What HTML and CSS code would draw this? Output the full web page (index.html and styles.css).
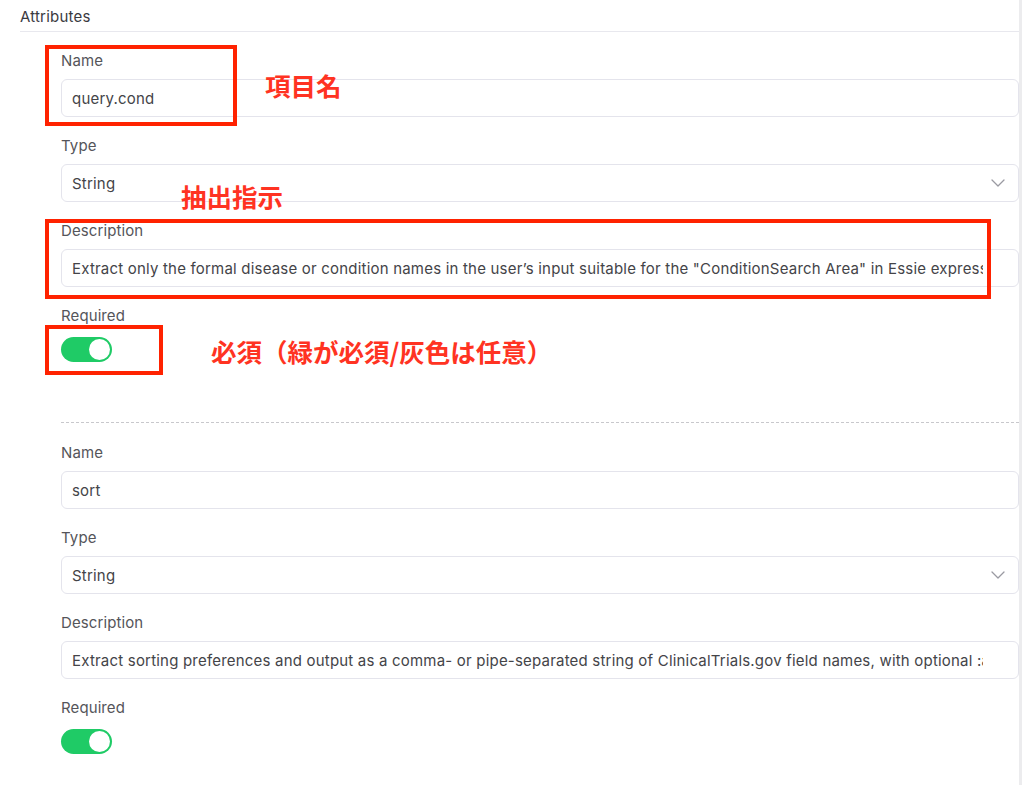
FILE: index.html
```html
<!DOCTYPE html>
<html lang="ja">
<head>
  <meta charset="UTF-8">
  <title>Attributes</title>
  <link rel="stylesheet" href="styles.css">
</head>
<body>
<main class="panel">

  <div class="panel-title">Attributes</div>

  <div class="attr-list">

    <div class="attr">
      <div class="field">
        <label class="field-label">Name</label>
        <input class="text-input" type="text" value="query.cond" readonly>
      </div>
      <div class="field">
        <label class="field-label">Type</label>
        <div class="select-box">
          <span>String</span>
          <svg class="chevron" width="14" height="8" viewBox="0 0 14 8"><path d="M1 1l6 6 6-6" fill="none" stroke="#9a9aa2" stroke-width="1.3" stroke-linecap="round" stroke-linejoin="round"/></svg>
        </div>
      </div>
      <div class="field">
        <label class="field-label">Description</label>
        <input class="text-input desc" type="text" value="Extract only the formal disease or condition names in the user’s input suitable for the &quot;ConditionSearch Area&quot; in Essie expression syntax" readonly>
      </div>
      <div class="field">
        <label class="field-label">Required</label>
        <div class="toggle on"><span class="knob"></span></div>
      </div>
    </div>

    <div class="attr">
      <div class="field">
        <label class="field-label">Name</label>
        <input class="text-input" type="text" value="sort" readonly>
      </div>
      <div class="field">
        <label class="field-label">Type</label>
        <div class="select-box">
          <span>String</span>
          <svg class="chevron" width="14" height="8" viewBox="0 0 14 8"><path d="M1 1l6 6 6-6" fill="none" stroke="#9a9aa2" stroke-width="1.3" stroke-linecap="round" stroke-linejoin="round"/></svg>
        </div>
      </div>
      <div class="field">
        <label class="field-label">Description</label>
        <input class="text-input desc" type="text" value="Extract sorting preferences and output as a comma- or pipe-separated string of ClinicalTrials.gov field names, with optional :asc or :desc" readonly>
      </div>
      <div class="field">
        <label class="field-label">Required</label>
        <div class="toggle on"><span class="knob"></span></div>
      </div>
    </div>

  </div>
</main>

<!-- annotations drawn on top of the screenshot -->
<div class="mark mark-name"></div>
<div class="mark mark-desc"></div>
<div class="mark mark-required"></div>
<div class="note note-name">項目名</div>
<div class="note note-desc">抽出指示</div>
<div class="note note-required">必須（緑が必須/灰色は任意）</div>

</body>
</html>
```

FILE: styles.css
```css
body {
  margin: 0;
  font-family: Inter, "Noto Sans", sans-serif;
  background: #fff;
  overflow: hidden;
}

.panel {
  width: 999px;
  min-height: 785px;
  padding-left: 20px;
  border-right: 3px solid #ececee;
}

.panel-title {
  padding: 7px 0 4px;
  line-height: 20px;
  font-size: 15px;
  letter-spacing: 0.2px;
  color: #3a3a3f;
  border-bottom: 1px solid #e8e8ee;
}

.attr-list {
  padding: 19px 0 0 41px;
}

.attr + .attr {
  margin-top: 60px;
  padding-top: 20px;
  border-top: 1px dashed #c8c8cc;
}

.field + .field {
  margin-top: 19px;
}

.field-label {
  display: block;
  line-height: 20px;
  margin-bottom: 8px;
  font-size: 15px;
  letter-spacing: 0.1px;
  color: #55555a;
}

.text-input,
.select-box {
  box-sizing: border-box;
  width: 100%;
  height: 38px;
  padding: 0 10px;
  border: 1px solid #e4e4ec;
  border-radius: 6px;
  background: #fff;
  font: inherit;
  font-size: 15px;
  letter-spacing: 0.2px;
  color: #444448;
  outline: none;
}

.text-input.desc {
  padding-right: 35px;
}

.select-box {
  display: flex;
  align-items: center;
  justify-content: space-between;
  padding-right: 13px;
}

.chevron {
  display: block;
}

.toggle {
  width: 51px;
  height: 25px;
  margin-top: 11px;
  border-radius: 13px;
  background: #d4d4d8;
  position: relative;
}

.toggle.on {
  background: #1fcb66;
}

.knob {
  position: absolute;
  top: 2px;
  left: 2px;
  width: 21px;
  height: 21px;
  border-radius: 50%;
  background: #fff;
}

.toggle.on .knob {
  left: 28px;
}

/* red annotations */
.mark {
  position: absolute;
  box-sizing: border-box;
  border: 4px solid #ff2200;
}

.mark-name {
  left: 45px;
  top: 45px;
  width: 192px;
  height: 81px;
}

.mark-desc {
  left: 45px;
  top: 219px;
  width: 946px;
  height: 80px;
}

.mark-required {
  left: 45px;
  top: 325px;
  width: 118px;
  height: 50px;
}

.note {
  position: absolute;
  font-family: "Noto Sans CJK JP", sans-serif;
  font-weight: bold;
  font-size: 25.5px;
  line-height: 26px;
  color: #ff3322;
  white-space: nowrap;
}

.note-name {
  left: 265px;
  top: 72px;
}

.note-desc {
  left: 181px;
  top: 183px;
}

.note-required {
  left: 211px;
  top: 338px;
}
```
